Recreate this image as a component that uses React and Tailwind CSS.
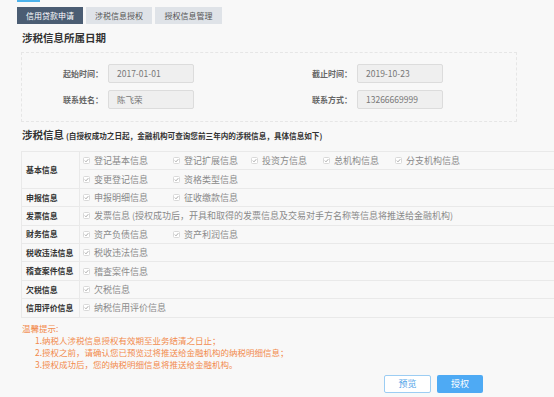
import React from 'react';

const Check = () => (
  <svg width="7" height="7" viewBox="0 0 7 7" className="shrink-0">
    <rect x="0.5" y="0.5" width="6" height="6" rx="1" fill="#fff" stroke="#d9d9d9" />
    <path d="M1.8 3.6 L3 4.8 L5.3 2.2" fill="none" stroke="#a0a0a0" strokeWidth="0.9" />
  </svg>
);

const Item = ({ label, w }) => (
  <div className={`flex items-center gap-[4px] ${w}`}>
    <Check />
    <span className="text-[9px] leading-none text-[#8a8a8a] whitespace-nowrap">{label}</span>
  </div>
);

const widths = ['w-[90px]', 'w-[78px]', 'w-[72px]', 'w-[72px]', 'w-[80px]'];

const ItemRow = ({ items, last }) => (
  <div className={`flex items-center pl-[3px] ${last ? 'h-[17.4px]' : 'h-[18.4px] border-b border-[#e9e9e9]'}`}>
    {items.map((it, i) => (
      <Item key={it} label={it} w={widths[i]} />
    ))}
  </div>
);

const groups = [
  { title: '基本信息', rows: [['登记基本信息', '登记扩展信息', '投资方信息', '总机构信息', '分支机构信息'], ['变更登记信息', '资格类型信息']] },
  { title: '申报信息', rows: [['申报明细信息', '征收缴款信息']] },
  { title: '发票信息', rows: [['发票信息 (授权成功后，开具和取得的发票信息及交易对手方名称等信息将推送给金融机构)']] },
  { title: '财务信息', rows: [['资产负债信息', '资产利润信息']] },
  { title: '税收违法信息', rows: [['税收违法信息']] },
  { title: '稽查案件信息', rows: [['稽查案件信息']] },
  { title: '欠税信息', rows: [['欠税信息']] },
  { title: '信用评价信息', rows: [['纳税信用评价信息']] },
];

const Field = ({ label, value, lw }) => (
  <div className="flex items-center">
    <span className={`${lw} text-right text-[8px] font-bold text-[#666] leading-none`}>{label}：</span>
    <div className="ml-[5px] w-[86px] h-[19px] rounded-[2px] border border-[#dcdcdc] bg-[#efefef] flex items-center pl-[8px] text-[8.5px] text-[#777] leading-none">
      {value}
    </div>
  </div>
);

export default function App() {
  return (
    <div className="w-[554px] h-[397px] overflow-hidden bg-[#f8f8f8] font-['Noto_Sans_CJK_SC',sans-serif]">
      <div className="pl-[17px]">
        <div className="w-[23px] h-[2px] bg-[#4db3ec]" />
      </div>

      <div className="flex gap-[3px] pl-[17px] mt-[5px]">
        <div className="w-[66px] h-[17px] flex items-center justify-center bg-[#4b5d73] text-white text-[8px]">信用贷款申请</div>
        <div className="w-[66px] h-[17px] flex items-center justify-center bg-[#dfe3e8] text-[#555] text-[8px]">涉税信息授权</div>
        <div className="w-[67px] h-[17px] flex items-center justify-center bg-[#dfe3e8] text-[#555] text-[8px]">授权信息管理</div>
      </div>

      <h2 className="ml-[22px] mt-[7px] text-[10.5px] leading-[14px] font-bold text-[#333]">涉税信息所属日期</h2>

      <div className="ml-[21px] mt-[7px] w-[496px] h-[70px] border border-dashed border-[#e6e6e6] pt-[11px] flex flex-col gap-[7px]">
        <div className="grid grid-cols-[247px_247px]">
          <Field label="起始时间" value="2017-01-01" lw="w-[81px]" />
          <Field label="截止时间" value="2019-10-23" lw="w-[83px]" />
        </div>
        <div className="grid grid-cols-[247px_247px]">
          <Field label="联系姓名" value="陈飞荣" lw="w-[81px]" />
          <Field label="联系方式" value="13266669999" lw="w-[83px]" />
        </div>
      </div>

      <div className="ml-[22px] mt-[6px] flex items-baseline leading-[14px]">
        <span className="text-[10.5px] font-bold text-[#333]">涉税信息</span>
        <span className="ml-[2px] text-[7.6px] font-bold text-[#333]">(自授权成功之日起，金融机构可查询您前三年内的涉税信息，具体信息如下)</span>
      </div>

      <div className="ml-[21px] mt-[8px] w-[533px] border-t border-l border-[#e9e9e9]">
        {groups.map((g) => (
          <div key={g.title} className="flex border-b border-[#e9e9e9]">
            <div className="w-[58px] shrink-0 border-r border-[#e9e9e9] flex items-center pl-[4px] text-[7.9px] font-bold text-[#333]">
              {g.title}
            </div>
            <div className="flex-1">
              {g.rows.map((r, i) => (
                <ItemRow key={i} items={r} last={i === g.rows.length - 1} />
              ))}
            </div>
          </div>
        ))}
      </div>

      <div className="mt-[4px] ml-[22px] text-[8.5px] leading-[12.3px] text-[#f28a4c]">
        <div>温馨提示:</div>
        <div className="pl-[13px]">1.纳税人涉税信息授权有效期至业务结清之日止；</div>
        <div className="pl-[13px]">2.授权之前，请确认您已预览过将推送给金融机构的纳税明细信息；</div>
        <div className="pl-[13px]">3.授权成功后，您的纳税明细信息将推送给金融机构。</div>
      </div>

      <div className="mt-[4px] flex justify-end gap-[6px] pr-[71px]">
        <button className="w-[47px] h-[18px] rounded-[2px] border border-[#9ccdf3] bg-white text-[9px] text-[#4ea3e8] leading-none">预览</button>
        <button className="w-[46px] h-[18px] rounded-[2px] bg-[#4eaaf4] text-[9px] text-white leading-none">授权</button>
      </div>
    </div>
  );
}
